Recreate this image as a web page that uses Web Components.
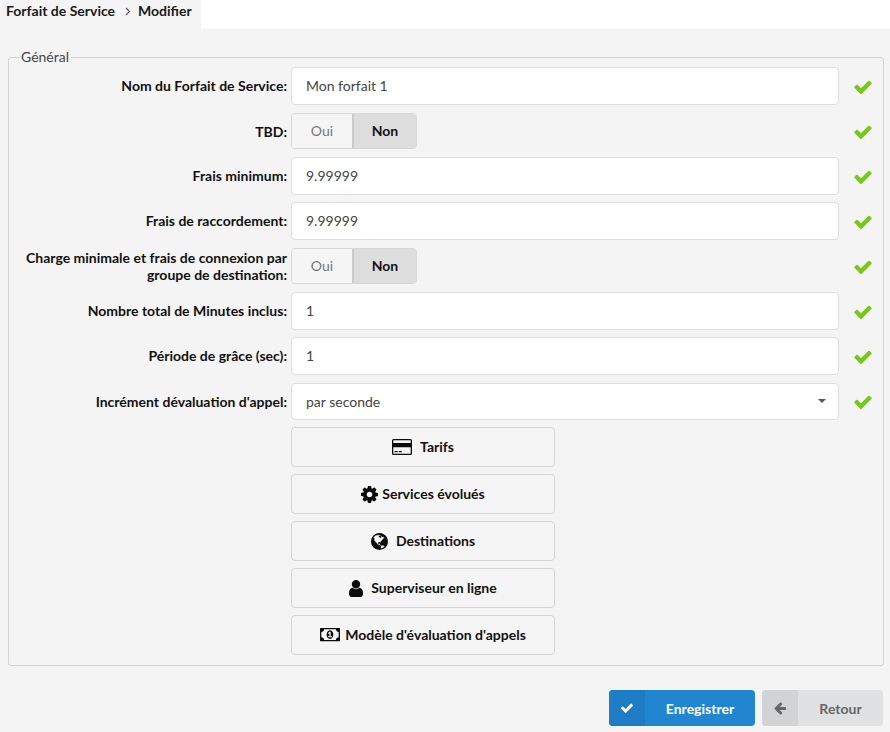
<!DOCTYPE html>
<html lang="fr">
<head>
<meta charset="utf-8">
<title>Forfait de Service</title>
<style>
    html, body {
        margin: 0;
        height: 732px;
        overflow: hidden;
        background: #f4f4f4;
        font-family: Lato, "Open Sans", sans-serif;
        font-size: 14px;
        color: #111;
    }
</style>
</head>
<body>
<template id="icons">
    <svg id="check" viewBox="0 0 1792 1792"><path d="M1671 566q0 40-28 68l-724 724-136 136q-28 28-68 28t-68-28l-136-136-362-362q-28-28-28-68t28-68l136-136q28-28 68-28t68 28l294 295 656-657q28-28 68-28t68 28l136 136q28 28 28 68z"/></svg>
    <svg id="arrow" viewBox="0 0 1792 1792"><path d="M1664 896v128q0 53-32.5 90.5t-84.5 37.5h-704l293 294q38 36 38 90t-38 90l-75 76q-37 37-90 37-52 0-91-37l-651-652q-37-37-37-90 0-52 37-91l651-650q38-38 91-38 52 0 90 38l75 74q38 38 38 91t-38 91l-293 293h704q52 0 84.5 37.5t32.5 90.5z"/></svg>
    <svg id="cog" viewBox="128 128 1536 1536"><path d="M1152 896q0-106-75-181t-181-75-181 75-75 181 75 181 181 75 181-75 75-181zm512-109v222q0 12-8 23t-20 13l-185 28q-19 54-39 91 35 50 107 138 10 12 10 25t-9 23q-27 37-99 108t-94 71q-12 0-26-9l-138-108q-44 23-91 38-16 136-29 186-7 28-36 28h-222q-14 0-24.5-8.5t-11.5-21.5l-28-184q-49-16-90-37l-141 107q-10 9-25 9-14 0-25-11-126-114-165-168-7-10-7-23 0-12 8-23 15-21 51-66.5t54-70.5q-27-50-41-99l-183-27q-13-2-21-12.5t-8-23.5v-222q0-12 8-23t19-13l186-28q14-46 39-92-40-57-107-138-10-12-10-24 0-10 9-23 26-36 98.5-107.5t94.5-71.5q13 0 26 10l138 107q44-23 91-38 16-136 29-186 7-28 36-28h222q14 0 24.5 8.5t11.5 21.5l28 184q49 16 90 37l142-107q9-9 24-9 13 0 25 10 129 119 165 170 7 8 7 22 0 12-8 23-15 21-51 66.5t-54 70.5q26 50 41 98l183 28q13 2 21 12.5t8 23.5z"/></svg>
    <svg id="user" viewBox="256 128 1280 1536"><path d="M1536 1399q0 109-62.5 187t-150.5 78h-854q-88 0-150.5-78t-62.5-187q0-85 8.5-160.5t31.5-152 58.5-131 94-89 134.5-34.5q131 128 313 128t313-128q76 0 134.5 34.5t94 89 58.5 131 31.5 152 8.5 160.5zm-256-887q0 159-112.5 271.5t-271.5 112.5-271.5-112.5-112.5-271.5 112.5-271.5 271.5-112.5 271.5 112.5 112.5 271.5z"/></svg>
    <svg id="globe" viewBox="128 128 1536 1536"><path d="M896 128q209 0 385.500 103t279.500 279.500 103 385.500-103 385.500-279.500 279.500-385.500 103-385.500-103-279.500-279.500-103-385.500 103-385.500 279.500-279.500 385.500-103zm274 521q-2 1-9.500 9.500t-13.500 9.500q2 0 4.500-5t5-11 3.500-7q6-7 22-15 14-6 52-12 34-8 51 11-2-2 9.500-13t14.500-12q3-2 15-4.500t15-7.500l2-22q-12 1-17.500-7t-6.500-21q0 2-6 8 0-7-4.500-8t-11.500 1-9 1q-10-3-15-7.500t-8-16.500-4-15q-2-5-9.500-10.500t-9.500-10.500q-1-2-2.500-5.500t-3-6.500-4-5.500-5.500-2.500-7 5-7.500 10-4.500 5q-3-2-6-1.500t-4.500 1-4.500 3-5 3.500q-3 2-8.500 3t-8.500 2q15-5-1-11-10-4-16-3 9-4 7.500-12t-8.500-14h5q-1-4-8.500-8.500t-17.500-8.500-13-6q-8-5-34-9.500t-33-.5q-5 6-4.500 10.500t4 14 3.500 12.500q1 6-5.500 13t-6.500 12q0 7 14 15.500t10 21.500q-3 8-16 16t-16 12q-5 8-1.500 18.500t10.500 16.500q2 2 1.500 4t-3.500 4.500-5.500 4-6.500 3.500l-3 2q-11 5-20.500-6t-13.500-26q-7-25-16-30-23-8-29 1-5-13-41-26-25-9-58-4 6-1 0-15-7-15-19-12 3-6 4-17.500t1-13.500q3-13 12-23 1-1 7-8.500t9.500-13.500.5-6q35 4 50-11 5-5 11.500-17t10.500-17q9-6 14-5.500t14.500 5.500 14.500 5q14 1 15.500-11t-7.500-20q12 1 3-17-4-7-8-9-12-4-27 5-8 4 2 8-1-1-9.500 10.500t-16.500 17.500-16-5q-1-1-5.500-13.500t-9.500-13.500q-8 0-16 15 3-8-11-15t-24-8q19-12-8-27-7-4-20.500-5t-19.500 4q-5 7-5.500 11.500t5 8 10.500 5.500 11.500 4 8.500 3q14 10 8 14-2 1-8.500 3.500t-11.500 4.500-6 4q-3 4 0 14t-2 14q-5-5-9-17.500t-7-16.500q7 9-25 6l-10-1q-4 0-16 2t-20.500 1-13.500-8q-4-8 0-20 1-4 4-2-4-3-11-9.500t-10-8.500q-46 15-94 41 6 1 12-1 5-2 13-6.500t10-5.500q34-14 42-7l5-5q14 16 20 25-7-4-30-1-20 6-22 12 7 12 5 18-4-3-11.500-10t-14.500-11-15-5q-16 0-22 1-146 80-235 222 7 7 12 8 4 1 5 9t2.500 11 11.500-3q9 8 3 19 1-1 44 27 19 17 21 21 3 11-10 18-1-2-9-9t-9-4q-3 5 .5 18.500t10.500 12.500q-7 0-9.500 16t-2.500 35.500-1 23.500l2 1q-3 12 5.500 34.500t21.500 19.500q-13 3 20 43 6 8 8 9 3 2 12 7.500t15 10 10 10.500q4 5 10 22.500t14 23.500q-2 6 9.500 20t10.500 23q-1 0-2.500 1t-2.500 1q3 7 15.500 14t15.500 13q1 3 2 10t3 11 8 2q2-20-24-62-15-25-17-29-3-5-5.500-15.500t-4.500-14.500q2 0 6 1.500t8.500 3.500 7.500 4 2 3q-3 7 2 17.500t12 18.500 17 19 12 13q6 6 14 19.500t0 13.500q9 0 20 10.500t17 19.500q5 8 8 26t5 24q2 7 8.500 13.500t12.500 9.500l16 8 13 7q5 2 18.500 10.500t21.500 11.500q10 4 16 4t14.500-2.500 13.500-3.500q15-2 29 15t21 21q36 19 55 11-2 1 .5 7.500t8 15.500 9 14.500 5.500 8.500q5 6 18 15t18 15q6-4 7-9-3 8 7 20t18 10q14-3 14-32-31 15-49-18 0-1-2.500-5.500t-4-8.500-2.500-8.500 0-7.500 5-3q9 0 10-3.500t-2-12.500-4-13q-1-8-11-20t-12-15q-5 9-16 8t-16-9q0 1-1.500 5.500t-1.500 6.500q-13 0-15-1 1-3 2.500-17.500t3.500-22.500q1-4 5.500-12t7.500-14.500 4-12.500-4.500-9.500-17.500-2.500q-19 1-26 20-1 3-3 10.500t-5 11.500-9 7q-7 3-24 2t-24-5q-13-8-22.500-29t-9.500-37q0-10 2.500-26.500t3-25-5.500-24.500q3-2 9-9.500t10-10.500q2-1 4.500-1.500t4.500 0 4-1.500 3-6q-1-1-4-3-3-3-4-3 7 3 28.500-1.500t27.500 1.500q15 11 22-2 0-1-2.500-9.500t-.5-13.500q5 27 29 9 3 3 15.500 5t17.500 5q3 2 7 5.500t5.500 4.500 5-.5 8.500-6.500q10 14 12 24 11 40 19 44 7 3 11 2t4.500-9.500 0-14-1.500-12.500l-1-8v-18l-1-8q-15-3-18.500-12t1.500-18.500 15-18.500q1-1 8-3.500t15.500-6.500 12.500-8q21-19 15-35 7 0 11-9-1 0-5-3t-7.500-5-4.500-2q9-5 2-16 5-3 7.500-11t7.500-10q9 12 21 2 8-8 1-16 5-7 20.500-10.500t18.500-9.500q7 2 8-2t1-12 3-12q4-5 15-9t13-5l17-11q3-4 0-4 18 2 31-11 10-11-6-20 3-6-3-9.500t-15-5.500q3-1 11.500-.5t10.500-1.500q15-10-7-16-17-5-43 12zm-163 877q206-36 351-189-3-3-12.500-4.500t-12.500-3.500q-18-7-24-8 1-7-2.500-13t-8-9-12.500-8-11-7q-2-2-7-6t-7-5.500-7.500-4.500-8.500-2-10 1l-3 1q-3 1-5.500 2.500t-5.500 3-4 3 0 2.500q-21-17-36-22-5-1-11-5.500t-10.500-7-10-1.500-11.500 7q-5 5-6 15t-2 13q-7-5 0-17.500t2-18.500q-3-6-10.500-4.500t-12 4.500-11.500 8.500-9 6.500-8.500 5.500-8.500 7.500q-3 4-6 12t-5 11q-2-4-11.500-6.500t-9.500-5.500q2 10 4 35t5 38q7 31-12 48-27 25-29 40-4 22 12 26 0 7-8 20.500t-7 21.500q0 6 2 16z"/></svg>
    <svg id="card" viewBox="0 0 20 16"><path fill-rule="evenodd" d="M1.500 0h17A1.500 1.500 0 0 1 20 1.500v13a1.500 1.500 0 0 1-1.500 1.500h-17A1.500 1.500 0 0 1 0 14.500v-13A1.500 1.500 0 0 1 1.500 0zM1.300 1.300V4h17.400V1.300zm0 6.900v6.500h17.400V8.200zM2.600 12h3v1.300h-3zm4.200 0h3v1.300h-3z"/></svg>
    <svg id="money" viewBox="0 256 1920 1280"><path d="M768 1152h384v-96h-128v-448h-114l-148 137 77 80q42-37 55-57h2v288h-128v96zm512-256q0 70-21 142t-59.500 134-101 101-141.500 39-141.500-39-101-101-59.500-134-21-142 21-142 59.500-134 101-101 141.500-39 141.500 39 101 101 59.500 134 21 142zm512 256v-512q-106 0-181-75t-75-181h-1152q0 106-75 181t-181 75v512q106 0 181 75t75 181h1152q0-106 75-181t181-75zm128-832v1152q0 26-19 45t-45 19h-1792q-26 0-45-19t-19-45v-1152q0-26 19-45t45-19h1792q26 0 45 19t19 45z"/></svg>
</template>

<app-breadcrumb>
    <span>Forfait de Service</span>
    <span>Modifier</span>
</app-breadcrumb>

<form-panel legend="Général">
    <form-row tight label="Nom du Forfait de Service:"><text-box value="Mon forfait 1"></text-box></form-row>
    <form-row label="TBD:"><yes-no></yes-no></form-row>
    <form-row tight label="Frais minimum:"><text-box value="9.99999"></text-box></form-row>
    <form-row tight label="Frais de raccordement:"><text-box value="9.99999"></text-box></form-row>
    <form-row label="Charge minimale et frais de connexion par groupe de destination:"><yes-no></yes-no></form-row>
    <form-row tight label="Nombre total de Minutes inclus:"><text-box value="1"></text-box></form-row>
    <form-row tight label="Période de grâce (sec):"><text-box value="1"></text-box></form-row>
    <form-row label="Incrément dévaluation d'appel:"><select-box value="par seconde"></select-box></form-row>
    <link-list>
        <link-button icon="card" width="20" height="16">Tarifs</link-button>
        <link-button icon="cog" width="17" height="17" gap="4">Services évolués</link-button>
        <link-button icon="globe" width="17" height="17" gap="8">Destinations</link-button>
        <link-button icon="user" width="14" height="17" gap="8">Superviseur en ligne</link-button>
        <link-button icon="money" width="20" height="13.300" gap="5">Modèle d'évaluation d'appels</link-button>
    </link-list>
</form-panel>

<form-actions>
    <action-button icon="check" kind="primary" style="width:146px">Enregistrer</action-button>
    <action-button icon="arrow" kind="muted" style="width:121px">Retour</action-button>
</form-actions>

<script>
    const iconMarkup = (name, width, height) => {
        const svg = document.getElementById('icons').content.getElementById(name).cloneNode(true)
        svg.removeAttribute('id')
        svg.setAttribute('width', width)
        svg.setAttribute('height', height)
        return svg.outerHTML
    }

    class AppBreadcrumb extends HTMLElement {
        constructor() {
            super()
            this.attachShadow({ mode: 'open' })
            this.shadowRoot.innerHTML = `
                <style>
                    :host {
                        display: block;
                        height: 29px;
                        background: #fff;
                    }
                    div {
                        width: 201px;
                        height: 29px;
                        box-sizing: border-box;
                        padding: 2px 0 0 6px;
                        background: #f4f4f4;
                        display: flex;
                        font-size: 14px;
                        font-weight: 700;
                        line-height: 17px;
                        color: #1a1a1a;
                    }
                    svg { margin: 5px 7px 0 10px; flex: none; }
                    ::slotted(span) { white-space: nowrap; }
                </style>
                <div>
                    <slot name="first"></slot>
                    <svg width="6" height="9" viewBox="0 0 6 9"><path d="M1 1l3.500 3.500L1 8" fill="none" stroke="#555" stroke-width="1.100"/></svg>
                    <slot name="last"></slot>
                </div>
            `
        }
        connectedCallback() {
            const items = this.querySelectorAll('span')
            items[0].slot = 'first'
            items[1].slot = 'last'
        }
    }
    customElements.define('app-breadcrumb', AppBreadcrumb)

    class FormPanel extends HTMLElement {
        constructor() {
            super()
            this.attachShadow({ mode: 'open' })
            this.shadowRoot.innerHTML = `
                <style>
                    :host {
                        display: block;
                        margin: 19px 6px 0 8px;
                    }
                    fieldset {
                        margin: 0;
                        padding: 0 0 10px;
                        border: 1px solid #d3d3d3;
                        border-radius: 3px;
                        height: 606px;
                        box-sizing: content-box;
                        min-width: 0;
                    }
                    legend {
                        margin-left: 11px;
                        padding: 0 2px 2px 1px;
                        font-size: 14px;
                        line-height: 17px;
                        color: #444;
                    }
                </style>
                <fieldset>
                    <legend></legend>
                    <slot></slot>
                </fieldset>
            `
        }
        connectedCallback() {
            this.shadowRoot.querySelector('legend').textContent = this.getAttribute('legend')
        }
    }
    customElements.define('form-panel', FormPanel)

    class FormRow extends HTMLElement {
        constructor() {
            super()
            this.attachShadow({ mode: 'open' })
            this.shadowRoot.innerHTML = `
                <style>
                    :host {
                        display: grid;
                        grid-template-columns: 278px 548px 1fr;
                        column-gap: 4px;
                        align-items: center;
                        height: 38px;
                        margin-bottom: 7px;
                    }
                    label {
                        justify-self: end;
                        text-align: right;
                        font-weight: 700;
                        font-size: 14px;
                        line-height: 17px;
                        color: #111;
                    }
                    :host([tight]) label { padding-bottom: 2px; }
                    .ok {
                        display: flex;
                        padding: 2px 0 0 10px;
                        fill: #78c81a;
                    }
                </style>
                <label></label>
                <div><slot></slot></div>
                <div class="ok">${iconMarkup('check', 20, 20)}</div>
            `
        }
        connectedCallback() {
            this.shadowRoot.querySelector('label').textContent = this.getAttribute('label')
        }
    }
    customElements.define('form-row', FormRow)

    class TextBox extends HTMLElement {
        constructor() {
            super()
            this.attachShadow({ mode: 'open' })
            this.shadowRoot.innerHTML = `
                <style>
                    :host { display: block; }
                    input {
                        display: block;
                        width: 100%;
                        height: 38px;
                        box-sizing: border-box;
                        padding: 0 14px 2px;
                        border: 1px solid #dedede;
                        border-radius: 4px;
                        background: #fff;
                        font: 14px Lato, sans-serif;
                        color: #444;
                        outline: none;
                    }
                </style>
                <input type="text">
            `
        }
        connectedCallback() {
            this.shadowRoot.querySelector('input').setAttribute('value', this.getAttribute('value'))
        }
    }
    customElements.define('text-box', TextBox)

    class SelectBox extends HTMLElement {
        constructor() {
            super()
            this.attachShadow({ mode: 'open' })
            this.shadowRoot.innerHTML = `
                <style>
                    :host { display: block; }
                    div {
                        display: flex;
                        align-items: center;
                        justify-content: space-between;
                        height: 37px;
                        margin-top: 1px;
                        box-sizing: border-box;
                        padding: 0 12px 0 14px;
                        border: 1px solid #dedede;
                        border-radius: 4px;
                        background: #fff;
                        font-size: 14px;
                        color: #444;
                    }
                    i {
                        width: 0;
                        height: 0;
                        margin-top: -2px;
                        border: 4px solid transparent;
                        border-top-color: #555;
                        border-bottom-width: 0;
                    }
                </style>
                <div><span></span><i></i></div>
            `
        }
        connectedCallback() {
            this.shadowRoot.querySelector('span').textContent = this.getAttribute('value')
        }
    }
    customElements.define('select-box', SelectBox)

    class YesNo extends HTMLElement {
        constructor() {
            super()
            this.attachShadow({ mode: 'open' })
            this.shadowRoot.innerHTML = `
                <style>
                    :host {
                        display: flex;
                        width: 126px;
                        height: 36px;
                        box-sizing: border-box;
                        border: 1px solid #d8d8d8;
                        border-radius: 4px;
                        overflow: hidden;
                        font-size: 14px;
                        line-height: 34px;
                        text-align: center;
                    }
                    span { flex: none; }
                    .off {
                        width: 60px;
                        background: #f5f5f5;
                        color: #777;
                    }
                    .on {
                        width: 64px;
                        background: #dddddd;
                        border-left: 2px solid #cbcbcb;
                        box-sizing: border-box;
                        font-weight: 700;
                        color: #111;
                    }
                </style>
                <span class="off">Oui</span>
                <span class="on">Non</span>
            `
        }
    }
    customElements.define('yes-no', YesNo)

    class LinkList extends HTMLElement {
        constructor() {
            super()
            this.attachShadow({ mode: 'open' })
            this.shadowRoot.innerHTML = `
                <style>
                    :host {
                        display: flex;
                        flex-direction: column;
                        gap: 7px;
                        width: 264px;
                        margin: 0 0 0 282px;
                    }
                </style>
                <slot></slot>
            `
        }
    }
    customElements.define('link-list', LinkList)

    class LinkButton extends HTMLElement {
        constructor() {
            super()
            this.attachShadow({ mode: 'open' })
        }
        connectedCallback() {
            const gap = this.getAttribute('gap') || 8
            const icon = iconMarkup(this.getAttribute('icon'), this.getAttribute('width'), this.getAttribute('height'))
            this.shadowRoot.innerHTML = `
                <style>
                    :host {
                        display: flex;
                        align-items: center;
                        justify-content: center;
                        gap: ${gap}px;
                        height: 40px;
                        box-sizing: border-box;
                        border: 1px solid #d5d5d5;
                        border-radius: 4px;
                        background: #f5f5f5;
                        font-size: 14px;
                        font-weight: 700;
                        color: #111;
                        fill: #0c0c0c;
                    }
                    span { padding-bottom: 2px; }
                </style>
                ${icon}<span><slot></slot></span>
            `
        }
    }
    customElements.define('link-button', LinkButton)

    class FormActions extends HTMLElement {
        constructor() {
            super()
            this.attachShadow({ mode: 'open' })
            this.shadowRoot.innerHTML = `
                <style>
                    :host {
                        display: flex;
                        justify-content: flex-end;
                        gap: 7px;
                        margin: 24px 7px 0 0;
                    }
                </style>
                <slot></slot>
            `
        }
    }
    customElements.define('form-actions', FormActions)

    class ActionButton extends HTMLElement {
        constructor() {
            super()
            this.attachShadow({ mode: 'open' })
        }
        connectedCallback() {
            this.shadowRoot.innerHTML = `
                <style>
                    :host {
                        display: flex;
                        height: 36px;
                        border-radius: 4px;
                        overflow: hidden;
                        font-size: 14px;
                        font-weight: 700;
                    }
                    :host([kind="primary"]) { background: #2185d0; color: #fff; fill: #fff; }
                    :host([kind="primary"]) .icon { background: #1e7dc5; }
                    :host([kind="muted"]) { background: #e0e1e2; color: #666; fill: #666; }
                    :host([kind="muted"]) .icon { background: #d2d3d4; }
                    .icon {
                        flex: none;
                        width: 36px;
                        display: flex;
                        align-items: center;
                        justify-content: center;
                    }
                    .text {
                        flex: 1;
                        display: flex;
                        align-items: center;
                        justify-content: center;
                    }
                </style>
                <div class="icon">${iconMarkup(this.getAttribute('icon'), 14, 14)}</div>
                <div class="text"><slot></slot></div>
            `
        }
    }
    customElements.define('action-button', ActionButton)
</script>
</body>
</html>
